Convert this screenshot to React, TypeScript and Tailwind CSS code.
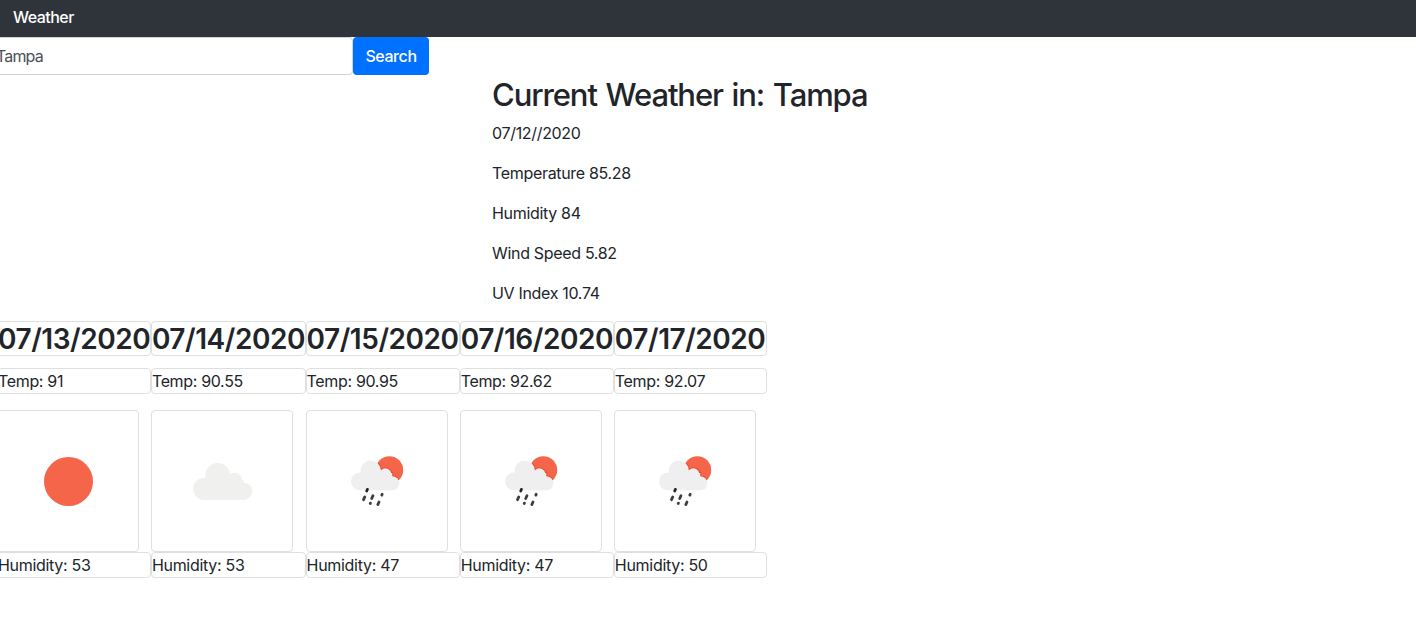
type Condition = 'clear' | 'cloudy' | 'rain';

interface Day {
  date: string;
  temp: string;
  humidity: number;
  condition: Condition;
  width: string;
}

const days: Day[] = [
  { date: '07/13/2020', temp: '91', humidity: 53, condition: 'clear', width: 'w-[153.9px]' },
  { date: '07/14/2020', temp: '90.55', humidity: 53, condition: 'cloudy', width: 'w-[154.7px]' },
  { date: '07/15/2020', temp: '90.95', humidity: 47, condition: 'rain', width: 'w-[154.1px]' },
  { date: '07/16/2020', temp: '92.62', humidity: 47, condition: 'rain', width: 'w-[154.2px]' },
  { date: '07/17/2020', temp: '92.07', humidity: 50, condition: 'rain', width: 'w-[153px]' },
];

const current = ['07/12//2020', 'Temperature 85.28', 'Humidity 84', 'Wind Speed 5.82', 'UV Index 10.74'];

function RainCloud() {
  return (
    <>
      <circle cx="63.7" cy="59.7" r="10.2" />
      <circle cx="53" cy="70.4" r="8.9" />
      <circle cx="78.3" cy="63.6" r="6.3" />
      <circle cx="85.3" cy="72.3" r="7" />
      <rect x="53" y="62" width="32.3" height="17.3" />
    </>
  );
}

function WeatherIcon({ condition }: { condition: Condition }) {
  return (
    <svg viewBox="0 0 140 140" className="block size-[140px]">
      {condition === 'clear' && <circle cx="70.5" cy="70.5" r="24.5" fill="#f56549" />}
      {condition === 'cloudy' && (
        <g fill="#f0f0ee">
          <circle cx="65.7" cy="64.6" r="12.5" />
          <circle cx="52.1" cy="77.9" r="11" />
          <circle cx="82.6" cy="69.3" r="7.6" />
          <circle cx="91.5" cy="80.2" r="8.7" />
          <rect x="52" y="69" width="39.5" height="19.9" />
        </g>
      )}
      {condition === 'rain' && (
        <>
          <clipPath id="sun-edge">
            <circle cx="82.4" cy="59" r="13.6" />
          </clipPath>
          <circle cx="82.4" cy="59" r="13.8" fill="#f56549" />
          <g clipPath="url(#sun-edge)" fill="#f23b1e" stroke="#f23b1e" strokeWidth="1.6">
            <RainCloud />
          </g>
          <g fill="#efefef">
            <RainCloud />
          </g>
          <g stroke="#3d3d3d" strokeWidth="2.8" strokeLinecap="round">
            <path d="M60.4 78.4 L59.7 80" stroke="#222" />
            <path d="M57.8 85.9 L56.5 88.7" />
            <path d="M66 84.7 L64.7 87.5" />
            <path d="M63.4 92.1 L63.2 92.5" />
            <path d="M75.2 83.2 L74.8 84.1" />
            <path d="M72 91 L70.8 93.6" />
          </g>
        </>
      )}
    </svg>
  );
}

function DayColumn({ day }: { day: Day }) {
  return (
    <div className={`${day.width} shrink-0`}>
      <h3 className="mb-3 h-[35px] rounded border border-[#dfdfdf] text-[28px] leading-[35px] font-[580] tracking-[-0.46px] whitespace-nowrap">
        {day.date}
      </h3>
      <p className="mb-4 h-[26px] rounded border border-[#dfdfdf] leading-6 tracking-[-0.34px]">Temp: {day.temp}</p>
      <div className="size-[142px] rounded border border-[#dfdfdf]">
        <WeatherIcon condition={day.condition} />
      </div>
      <p className="h-[26px] rounded border border-[#dfdfdf] leading-6 tracking-[-0.3px]">Humidity: {day.humidity}</p>
    </div>
  );
}

export default function App() {
  return (
    <div className="h-[644px] overflow-hidden bg-white font-['Inter',sans-serif] text-base text-[#212529]">
      <nav className="flex h-[37px] items-center bg-[#2f333a] pb-[3px] pl-[13px] font-[450] tracking-[-0.52px] text-white">
        Weather
      </nav>
      <form className="-ml-[17px] flex h-[38px]" onSubmit={(e) => e.preventDefault()}>
        <input
          className="w-[370px] rounded border border-[#ced4da] px-3 tracking-[-0.85px] text-[#495057] outline-none"
          defaultValue="Tampa"
          aria-label="City"
        />
        <button className="w-[76px] rounded bg-[#0070ff] font-[450] tracking-[-0.42px] text-white">Search</button>
      </form>
      <section className="ml-[492px] h-[246px]">
        <h2 className="mb-[7px] pt-px text-[31px] leading-[38.4px] font-[550] tracking-[-1.1px] [word-spacing:1.5px]">
          Current Weather in: Tampa
        </h2>
        {current.map((line) => (
          <p key={line} className="mb-4 leading-6 tracking-[-0.32px]">
            {line}
          </p>
        ))}
      </section>
      <section className="-ml-[3px] flex">
        {days.map((day) => (
          <DayColumn key={day.date} day={day} />
        ))}
      </section>
    </div>
  );
}
